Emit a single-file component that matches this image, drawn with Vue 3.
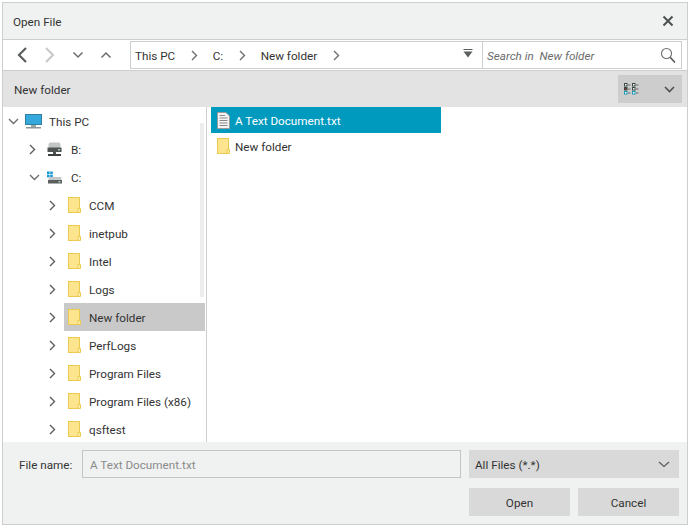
<script setup>
const crumbs = ['This PC', 'C:', 'New folder']

const treeFolders = [
  { name: 'CCM' },
  { name: 'inetpub' },
  { name: 'Intel' },
  { name: 'Logs' },
  { name: 'New folder', selected: true },
  { name: 'PerfLogs' },
  { name: 'Program Files' },
  { name: 'Program Files (x86)' },
  { name: 'qsftest' }
]
</script>

<template>
  <div class="dialog">
    <header class="title-bar">
      <span class="title">Open File</span>
      <svg class="close-icon" width="12" height="12" viewBox="0 0 12 12">
        <path d="M1.5 1.5 L10.5 10.5 M10.5 1.5 L1.5 10.5" stroke="#4d5250" stroke-width="2" fill="none" />
      </svg>
    </header>

    <div class="toolbar">
      <div class="nav-buttons">
        <svg width="12" height="18" viewBox="0 0 12 18"><path d="M10 2 L3 9 L10 16" stroke="#5a5f5d" stroke-width="2.2" fill="none" /></svg>
        <svg class="nav-forward" width="12" height="18" viewBox="0 0 12 18"><path d="M2 2 L9 9 L2 16" stroke="#c9cbca" stroke-width="2.2" fill="none" /></svg>
        <svg class="nav-down" width="12" height="8" viewBox="0 0 12 8"><path d="M1.5 1.5 L6 6 L10.5 1.5" stroke="#6a6f6d" stroke-width="1.5" fill="none" /></svg>
        <svg class="nav-up" width="12" height="8" viewBox="0 0 12 8"><path d="M1.5 6.5 L6 2 L10.5 6.5" stroke="#6a6f6d" stroke-width="1.5" fill="none" /></svg>
      </div>
      <div class="address-box">
        <template v-for="crumb in crumbs" :key="crumb">
          <span class="crumb">{{ crumb }}</span>
          <svg class="crumb-arrow" width="7" height="11" viewBox="0 0 7 11"><path d="M1 1 L5.5 5.5 L1 10" stroke="#6a6f6d" stroke-width="1.4" fill="none" /></svg>
        </template>
        <svg class="history-icon" width="10" height="9" viewBox="0 0 10 9">
          <path d="M0.5 0.5 H9.5" stroke="#5a5f5d" stroke-width="1" />
          <path d="M0.5 2.5 H9.5 L5 8.5 Z" fill="#5a5f5d" />
        </svg>
      </div>
      <div class="search-box">
        <span class="search-text">Search in&nbsp; New folder</span>
        <svg width="16" height="17" viewBox="0 0 16 17">
          <circle cx="6.5" cy="6.5" r="5" stroke="#6a6f6d" stroke-width="1.1" fill="none" />
          <path d="M10.2 10.4 L15 15.5" stroke="#5a5f5d" stroke-width="1.6" fill="none" />
        </svg>
      </div>
    </div>

    <div class="path-header">
      <span>New folder</span>
      <div class="view-button">
        <svg width="15" height="13" viewBox="0 0 15 13">
          <g stroke-width="1">
            <rect x="0.5" y="0.5" width="2.5" height="2.5" fill="#fff" stroke="#3d4a4a" />
            <rect x="0.5" y="4.5" width="2.5" height="2.5" fill="#7a2a2a" stroke="#3d4a4a" />
            <rect x="0.5" y="8.5" width="2.5" height="2.5" fill="#fff" stroke="#1a9ab8" />
            <rect x="8.5" y="0.5" width="2.5" height="2.5" fill="#fff" stroke="#3d4a4a" />
            <rect x="8.5" y="4.5" width="2.5" height="2.5" fill="#fff" stroke="#3d4a4a" />
            <rect x="8.5" y="8.5" width="2.5" height="2.5" fill="#fff" stroke="#1a9ab8" />
            <path d="M4 2 H6.5 M4 6 H6.5 M4 10 H6.5 M12 2 H14.5 M12 6 H14.5 M12 10 H14.5" stroke="#6a6f6d" fill="none" />
          </g>
        </svg>
        <svg width="11" height="7" viewBox="0 0 11 7"><path d="M1 1 L5.5 5.5 L10 1" stroke="#4d5250" stroke-width="1.6" fill="none" /></svg>
      </div>
    </div>

    <div class="content">
      <aside class="tree">
        <div class="tree-scroll"></div>
        <div class="tree-row level-0">
          <svg class="expander" width="11" height="7" viewBox="0 0 11 7"><path d="M1 1 L5.5 5.5 L10 1" stroke="#6a6f6d" stroke-width="1.4" fill="none" /></svg>
          <svg class="row-icon" width="18" height="15" viewBox="0 0 18 15">
            <rect x="0.5" y="0.5" width="16" height="10" fill="#36a9dc" stroke="#2f7f9f" />
            <rect x="6" y="11" width="5" height="2" fill="#9aa5a8" />
            <rect x="1" y="13" width="15" height="1.5" fill="#8d9699" />
          </svg>
          <span>This PC</span>
        </div>
        <div class="tree-row level-1">
          <svg class="expander" width="7" height="11" viewBox="0 0 7 11"><path d="M1 1 L5.5 5.5 L1 10" stroke="#5a5f5d" stroke-width="1.4" fill="none" /></svg>
          <svg class="row-icon" width="15" height="15" viewBox="0 0 15 15">
            <rect x="1.5" y="0.5" width="12" height="6" rx="2" fill="#c2c6c4" />
            <rect x="0.5" y="5.5" width="14" height="4.5" fill="#4f5452" />
            <rect x="11" y="7" width="2" height="1.5" fill="#a9c9b4" />
            <rect x="6" y="10" width="3" height="2" fill="#4f5452" />
            <rect x="1" y="12" width="13" height="2" fill="#3d4240" />
          </svg>
          <span>B:</span>
        </div>
        <div class="tree-row level-1">
          <svg class="expander wide" width="11" height="7" viewBox="0 0 11 7"><path d="M1 1 L5.5 5.5 L10 1" stroke="#6a6f6d" stroke-width="1.4" fill="none" /></svg>
          <svg class="row-icon" width="15" height="15" viewBox="-1 0 15 15">
            <g fill="#1a9ad6">
              <rect x="-1" y="1.5" width="2.6" height="2.6" />
              <rect x="2.2" y="1.5" width="2.6" height="2.6" />
              <rect x="-1" y="4.7" width="2.6" height="2.6" />
              <rect x="2.2" y="4.7" width="2.6" height="2.6" />
            </g>
            <rect x="0.5" y="7" width="13" height="3" rx="1" fill="#c5c8c6" />
            <rect x="0" y="10" width="14" height="3.5" fill="#5a5f5d" />
            <rect x="10.5" y="11" width="2" height="1.5" fill="#a9c9b4" />
          </svg>
          <span>C:</span>
        </div>
        <div
          v-for="folder in treeFolders"
          :key="folder.name"
          class="tree-row level-2"
        >
          <svg class="expander" width="7" height="11" viewBox="0 0 7 11"><path d="M1 1 L5.5 5.5 L1 10" stroke="#5a5f5d" stroke-width="1.4" fill="none" /></svg>
          <div class="folder-cell" :class="{ selected: folder.selected }">
            <svg class="row-icon" width="13" height="16" viewBox="0 0 13 16">
              <rect x="0.5" y="0.5" width="11" height="15" fill="#fde58f" stroke="#ecc94f" />
              <path d="M10 15.5 V11.5 H12.5 V15.5 Z" fill="#fdeeb0" stroke="#ecc94f" />
            </svg>
            <span>{{ folder.name }}</span>
          </div>
        </div>
      </aside>

      <main class="file-list">
        <div class="file-row active">
          <svg width="13" height="17" viewBox="0 0 13 17">
            <path d="M0.5 0.5 H9 L12.5 4 V16.5 H0.5 Z" fill="#f4f4f4" stroke="#9a9a9a" />
            <path d="M2.5 3.5 H8 M2.5 6 H10.5 M2.5 8.5 H10.5 M2.5 11 H10.5 M2.5 13.5 H10.5" stroke="#8a8a8a" stroke-width="1" />
          </svg>
          <span>A Text Document.txt</span>
        </div>
        <div class="file-row">
          <svg width="13" height="16" viewBox="0 0 13 16">
            <rect x="0.5" y="0.5" width="11" height="15" fill="#fde58f" stroke="#ecc94f" />
            <path d="M10 15.5 V11.5 H12.5 V15.5 Z" fill="#fdeeb0" stroke="#ecc94f" />
          </svg>
          <span>New folder</span>
        </div>
      </main>
    </div>

    <footer class="footer">
      <div class="footer-line">
        <label class="file-label">File name:</label>
        <div class="file-input">A Text Document.txt</div>
        <div class="file-type">
          <span>All Files (*.*)</span>
          <svg width="12" height="7" viewBox="0 0 12 7"><path d="M1 1 L6 5.5 L11 1" stroke="#5a5f5d" stroke-width="1.3" fill="none" /></svg>
        </div>
      </div>
      <div class="footer-buttons">
        <button type="button" class="action-btn">Open</button>
        <button type="button" class="action-btn">Cancel</button>
      </div>
    </footer>
  </div>
</template>

<style>
html, body {
  margin: 0;
  background: #fff;
}
</style>

<style scoped>
.dialog {
  box-sizing: border-box;
  width: 686px;
  height: 523px;
  margin: 2px 0 0 2px;
  border: 1px solid #cdcfce;
  background: #f0f2f1;
  display: flex;
  flex-direction: column;
  font-family: Roboto, "Open Sans", sans-serif;
  font-size: 11.7px;
  color: #333;
  overflow: hidden;
}

/* Roboto sits a pixel higher than the original UI font */
span,
label {
  padding-top: 2px;
}

.title-bar {
  height: 36px;
  flex: none;
  display: flex;
  align-items: center;
  justify-content: space-between;
  padding: 0 13px 0 10px;
  border-bottom: 1px solid #cdcfce;
}

.toolbar {
  height: 30px;
  flex: none;
  display: flex;
  align-items: center;
  background: #fff;
  border-bottom: 1px solid #cdcfce;
  padding-right: 5px;
}

.nav-buttons {
  width: 127px;
  flex: none;
  display: flex;
  align-items: center;
  padding-left: 13px;
  box-sizing: border-box;
}

.nav-forward {
  margin-left: 16px;
}

.nav-down {
  margin-left: 16px;
}

.nav-up {
  margin-left: 16px;
}

.address-box {
  box-sizing: border-box;
  width: 353px;
  height: 28px;
  display: flex;
  align-items: center;
  border: 1px solid #cdcfce;
  padding: 0 9px 0 4px;
}

.crumb-arrow {
  margin: 0 15px 0 15.5px;
}

.history-icon {
  margin-left: auto;
  margin-top: -4px;
}

.search-box {
  box-sizing: border-box;
  width: 199px;
  height: 28px;
  display: flex;
  align-items: center;
  justify-content: space-between;
  border: 1px solid #cdcfce;
  border-left: none;
  padding: 0 5px 0 4px;
}

.search-text {
  font-style: italic;
  color: #6b6b6b;
}

.path-header {
  height: 36px;
  flex: none;
  box-sizing: border-box;
  display: flex;
  align-items: center;
  justify-content: space-between;
  background: #e3e3e3;
  padding: 0 5px 0 11px;
}

.view-button {
  box-sizing: border-box;
  width: 64px;
  height: 28px;
  display: flex;
  align-items: center;
  justify-content: space-between;
  background: #cdcdcd;
  padding: 0 7px 0 6px;
}

.content {
  flex: 1;
  min-height: 0;
  display: flex;
  background: #fff;
}

.tree {
  position: relative;
  box-sizing: border-box;
  width: 204px;
  flex: none;
  border-right: 1px solid #cdcfce;
}

.tree-scroll {
  position: absolute;
  top: 16px;
  right: 2px;
  width: 4px;
  height: 174px;
  background: #ededed;
}

.tree-row {
  height: 28px;
  display: flex;
  align-items: center;
}

.level-0 {
  padding-left: 5px;
}

.level-0 .row-icon {
  margin-left: 6px;
}

.level-0 span {
  margin-left: 6px;
}

.level-1 {
  padding-left: 26px;
}

.level-1 .row-icon {
  margin-left: 11px;
}

.level-1 .expander.wide + .row-icon {
  margin-left: 7px;
}

.level-1 span {
  margin-left: 9px;
}

.level-2 {
  padding-left: 46px;
}

.level-2 .expander {
  margin-right: 8px;
}

.folder-cell {
  height: 28px;
  flex: 1;
  display: flex;
  align-items: center;
  padding-left: 4px;
  gap: 8px;
  margin-right: 1px;
}

.folder-cell.selected {
  background: #c9c9c9;
}

.file-list {
  flex: 1;
  padding: 0 0 0 4px;
}

.file-row {
  width: 230px;
  height: 26px;
  box-sizing: border-box;
  display: flex;
  align-items: center;
  gap: 5px;
  padding-left: 6px;
}

.file-row.active {
  background: #009abf;
  color: #fff;
}

.footer {
  height: 82px;
  flex: none;
  box-sizing: border-box;
  padding: 8px 8px 0 16px;
}

.footer-line {
  height: 28px;
  display: flex;
  align-items: center;
}

.file-label {
  width: 63px;
  flex: none;
}

.file-input {
  box-sizing: border-box;
  width: 379px;
  height: 28px;
  flex: none;
  border: 1px solid #c4c6c5;
  line-height: 26px;
  padding: 1px 0 0 7px;
  color: #8a8a8a;
}

.file-type {
  box-sizing: border-box;
  width: 210px;
  height: 28px;
  flex: none;
  margin-left: 8px;
  display: flex;
  align-items: center;
  justify-content: space-between;
  background: #d9d9d9;
  padding: 0 9px 0 6px;
}

.footer-buttons {
  display: flex;
  justify-content: flex-end;
  gap: 8px;
  margin-top: 10px;
}

.action-btn {
  box-sizing: border-box;
  width: 101px;
  height: 28px;
  border: none;
  background: #d9d9d9;
  font: inherit;
  color: inherit;
  padding: 2px 0 0;
}
</style>
